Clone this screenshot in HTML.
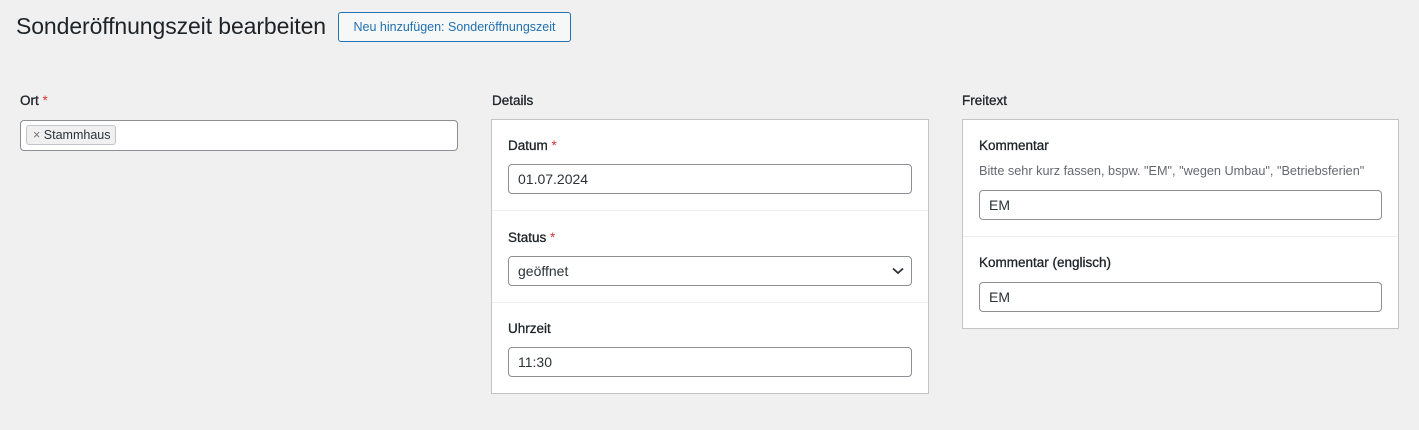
<!DOCTYPE html>
<html><head><meta charset="utf-8"><style>
*{box-sizing:border-box;margin:0;padding:0}
html,body{width:1419px;height:430px;background:#f0f0f1;overflow:hidden;font-family:"Liberation Sans",Arial,sans-serif;color:#1d2327}
.a{position:absolute}
h1{position:absolute;left:16px;top:13px;font-size:23px;font-weight:400;color:#1d2327;letter-spacing:-0.1px}
.btn{left:338px;top:12px;width:233px;height:30px;border:1px solid #2271b1;border-radius:3px;background:#f6f7f7;color:#2271b1;font-size:12.5px;line-height:28px;text-align:center}
.lbl{font-size:13.5px;font-weight:400;color:#1d2327;white-space:nowrap;-webkit-text-stroke:0.3px #1d2327}
.req{color:#d63638;-webkit-text-stroke:0}
.inp{background:#fff;border:1px solid #8c8f94;border-radius:4px;height:30px;font-size:14px;line-height:28px;padding-left:9px;color:#2c3338}
.box{background:#fff;border:1px solid #c3c4c7}
.hr{height:1px;background:#eeeeee}
.desc{font-size:12.7px;color:#646970;white-space:nowrap}
.tag{left:26px;top:125px;width:90px;height:20px;background:#f0f0f1;border:1px solid #c3c4c7;border-radius:3px;font-size:12.5px;line-height:18px;padding-left:6px;color:#2c3338}
</style></head><body>
<h1>Sonderöffnungszeit bearbeiten</h1>
<div class="a btn">Neu hinzufügen: Sonderöffnungszeit</div>

<div class="a lbl" style="left:20px;top:93px">Ort <span class="req">*</span></div>
<div class="a inp" style="left:20px;top:120px;width:438px;height:31px"></div>
<div class="a tag"><span style="color:#777">×</span> Stammhaus</div>

<div class="a lbl" style="left:492px;top:93px">Details</div>
<div class="a box" style="left:491px;top:119px;width:438px;height:275px"></div>
<div class="a lbl" style="left:508px;top:138px">Datum <span class="req">*</span></div>
<div class="a inp" style="left:508px;top:164px;width:404px">01.07.2024</div>
<div class="a hr" style="left:492px;top:210px;width:436px"></div>
<div class="a lbl" style="left:508px;top:230px">Status <span class="req">*</span></div>
<div class="a inp" style="left:508px;top:256px;width:404px">geöffnet
<svg style="position:absolute;right:6px;top:9px" width="14" height="10" viewBox="0 0 14 10"><path d="M2 2.5 L7 7 L12 2.5" fill="none" stroke="#2c3338" stroke-width="1.8"/></svg></div>
<div class="a hr" style="left:492px;top:302px;width:436px"></div>
<div class="a lbl" style="left:508px;top:321px">Uhrzeit</div>
<div class="a inp" style="left:508px;top:347px;width:404px">11:30</div>

<div class="a lbl" style="left:962px;top:93px">Freitext</div>
<div class="a box" style="left:962px;top:119px;width:437px;height:210px"></div>
<div class="a lbl" style="left:979px;top:138px">Kommentar</div>
<div class="a desc" style="left:979px;top:164px">Bitte sehr kurz fassen, bspw. "EM", "wegen Umbau", "Betriebsferien"</div>
<div class="a inp" style="left:979px;top:190px;width:403px">EM</div>
<div class="a hr" style="left:963px;top:236px;width:435px"></div>
<div class="a lbl" style="left:979px;top:255px">Kommentar (englisch)</div>
<div class="a inp" style="left:979px;top:282px;width:403px">EM</div>
</body></html>
